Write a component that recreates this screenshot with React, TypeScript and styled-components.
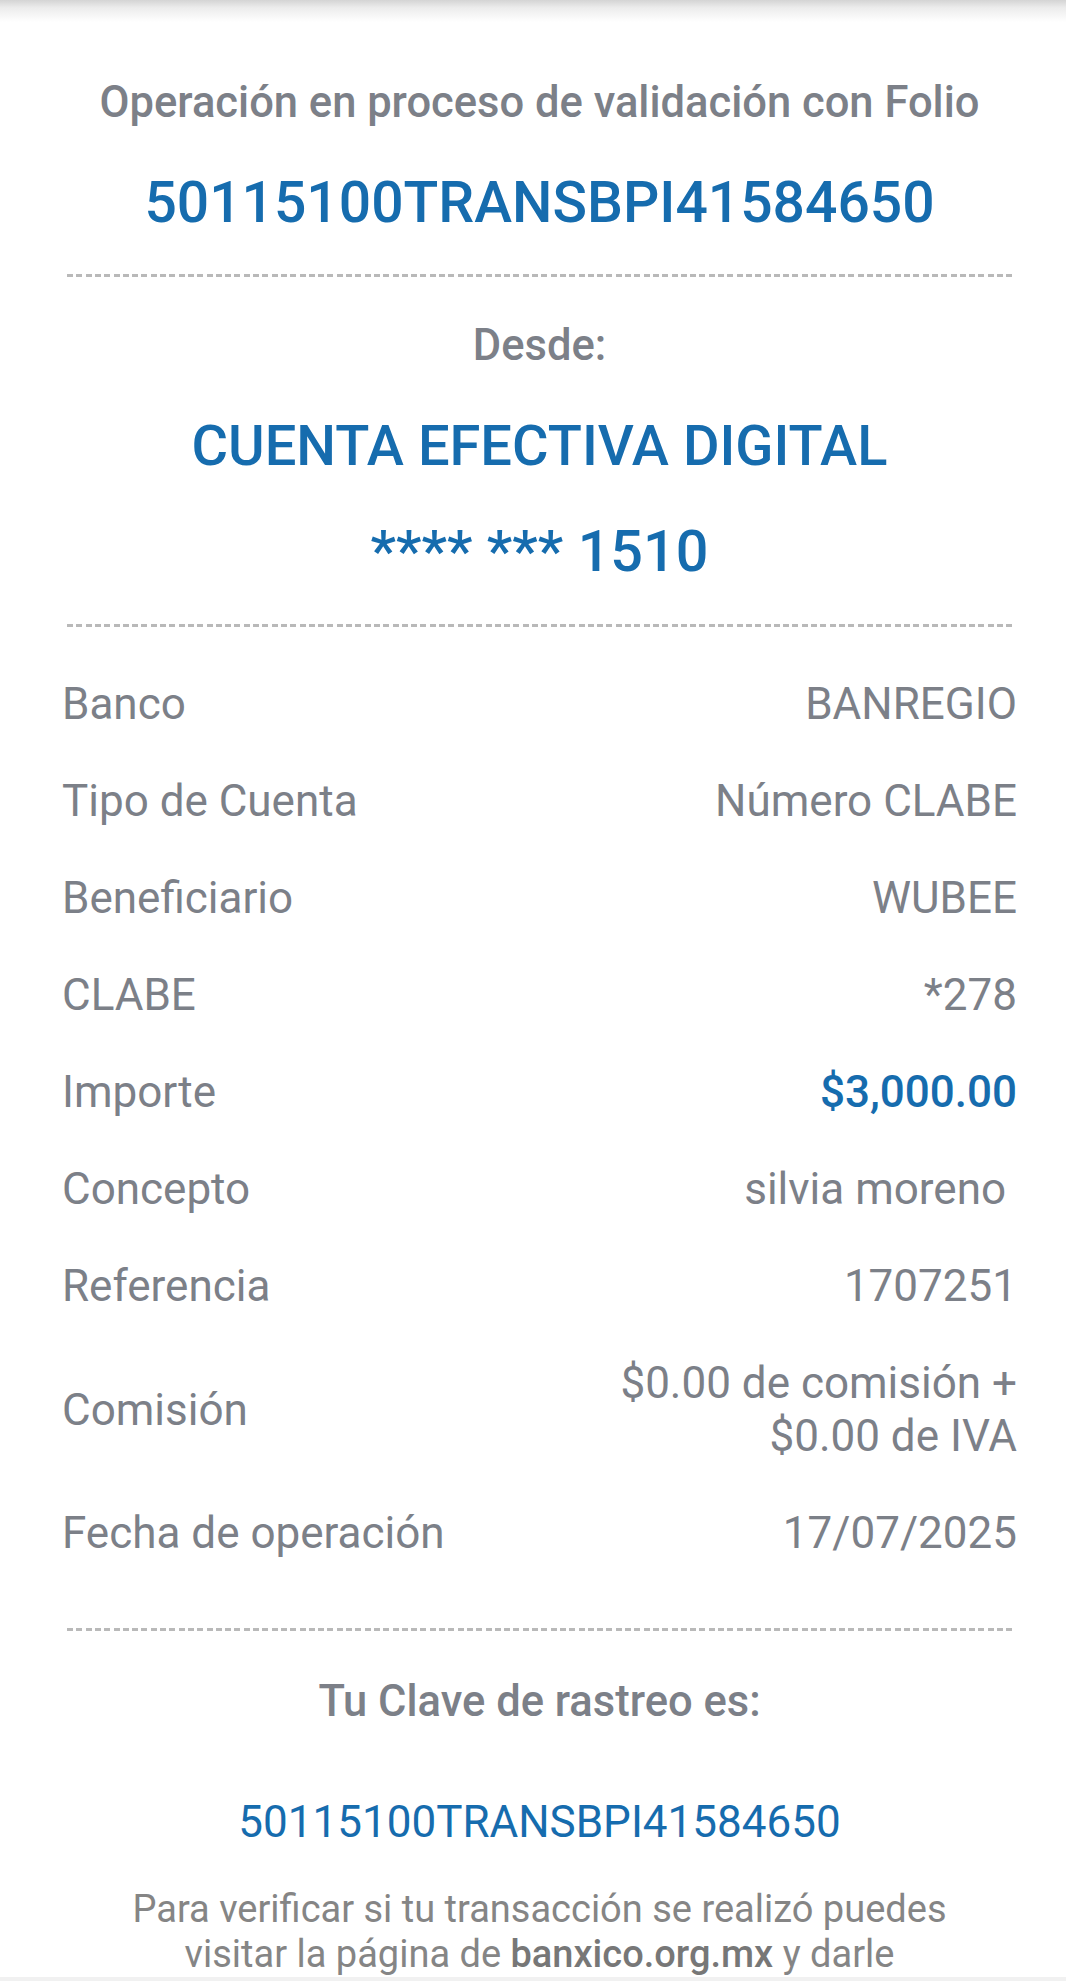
import * as React from 'react';
import styled, { createGlobalStyle } from 'styled-components';

const GlobalStyle = createGlobalStyle`
  html, body {
    margin: 0;
    padding: 0;
    background: #ffffff;
    font-family: Roboto, "Noto Sans", "Liberation Sans", sans-serif;
  }
`

const GRAY = '#7c8088'
const BLUE = '#166cae'

const Screen = styled.div`
  width: 1066px;
  height: 1981px;
  display: flex;
  flex-direction: column;
  overflow: hidden;
  background: #ffffff;
`
const TopShadow = styled.div`
  height: 22px;
  flex-shrink: 0;
  background: linear-gradient(to bottom, #d4d4d4 0%, #ececec 35%, #ffffff 100%);
`
const Content = styled.main`
  flex: 1;
  overflow: hidden;
  padding: 56px 49px 0 62px;
  display: flex;
  flex-direction: column;
`
const BottomBar = styled.div`
  height: 4px;
  flex-shrink: 0;
  background: #f1f1f1;
`
const Caption = styled.p<{ $top?: number }>`
  margin: ${p => p.$top ?? 0}px 0 0;
  text-align: center;
  font-size: 43.5px;
  line-height: 50px;
  font-weight: 500;
  color: ${GRAY};
`
const Highlight = styled.p<{ $top: number; $size: number; $lh: number; $weight?: number }>`
  margin: ${p => p.$top}px 0 0;
  text-align: center;
  font-size: ${p => p.$size}px;
  line-height: ${p => p.$lh}px;
  font-weight: ${p => p.$weight ?? 500};
  color: ${BLUE};
`
const Divider = styled.hr<{ $top: number }>`
  border: 0;
  height: 3px;
  margin: ${p => p.$top}px 4px 0 5px;
  background-image: repeating-linear-gradient(to right, #b9b9b9 0 6px, transparent 6px 9.3px);
`
const DetailList = styled.dl`
  margin: 29px 0 0;
  display: flex;
  flex-direction: column;
`
const Row = styled.div`
  display: flex;
  align-items: center;
  justify-content: space-between;
  padding: 22px 0;
  font-size: 44px;
  line-height: 53px;
`
const Label = styled.dt`
  margin: 0;
  color: ${GRAY};
  white-space: nowrap;
`
const Value = styled.dd<{ $accent?: boolean }>`
  margin: 0;
  max-width: 430px;
  text-align: right;
  color: ${p => (p.$accent ? BLUE : GRAY)};
  font-weight: ${p => (p.$accent ? 500 : 400)};
  white-space: pre-wrap;
`
const Note = styled.p`
  margin: 40px 0 0;
  text-align: center;
  font-size: 38px;
  line-height: 45px;
  color: #858585;

  b {
    font-weight: 500;
    color: #777777;
  }
`
const NoteLine = styled.span`
  display: block;
  white-space: nowrap;
`

type Detail = { label: string; value: string; accent?: boolean }

const details: Detail[] = [
  { label: 'Banco', value: 'BANREGIO' },
  { label: 'Tipo de Cuenta', value: 'Número CLABE' },
  { label: 'Beneficiario', value: 'WUBEE' },
  { label: 'CLABE', value: '*278' },
  { label: 'Importe', value: '$3,000.00', accent: true },
  { label: 'Concepto', value: 'silvia moreno ' },
  { label: 'Referencia', value: '1707251' },
  { label: 'Comisión', value: '$0.00 de comisión + $0.00 de IVA' },
  { label: 'Fecha de operación', value: '17/07/2025' },
]

const App: React.FunctionComponent = () => {
  return (
    <>
      <GlobalStyle />
      <Screen>
        <TopShadow />
        <Content>
          <Caption>Operación en proceso de validación con Folio</Caption>
          <Highlight $top={41} $size={57} $lh={68}>50115100TRANSBPI41584650</Highlight>
          <Divider $top={37} />

          <Caption $top={44}>Desde:</Caption>
          <Highlight $top={44} $size={56} $lh={62}>CUENTA EFECTIVA DIGITAL</Highlight>
          <Highlight $top={42} $size={57.5} $lh={66}>**** *** 1510</Highlight>
          <Divider $top={39} />

          <DetailList>
            {details.map(d => (
              <Row key={d.label}>
                <Label>{d.label}</Label>
                <Value $accent={d.accent}>{d.value}</Value>
              </Row>
            ))}
          </DetailList>
          <Divider $top={46} />

          <Caption $top={46}>Tu Clave de rastreo es:</Caption>
          <Highlight $top={70} $size={44} $lh={50} $weight={400}>50115100TRANSBPI41584650</Highlight>
          <Note>
            <NoteLine>Para verificar si tu transacción se realizó puedes</NoteLine>
            <NoteLine>visitar la página de <b>banxico.org.mx</b> y darle</NoteLine>
          </Note>
        </Content>
        <BottomBar />
      </Screen>
    </>
  );
}

export default App;
